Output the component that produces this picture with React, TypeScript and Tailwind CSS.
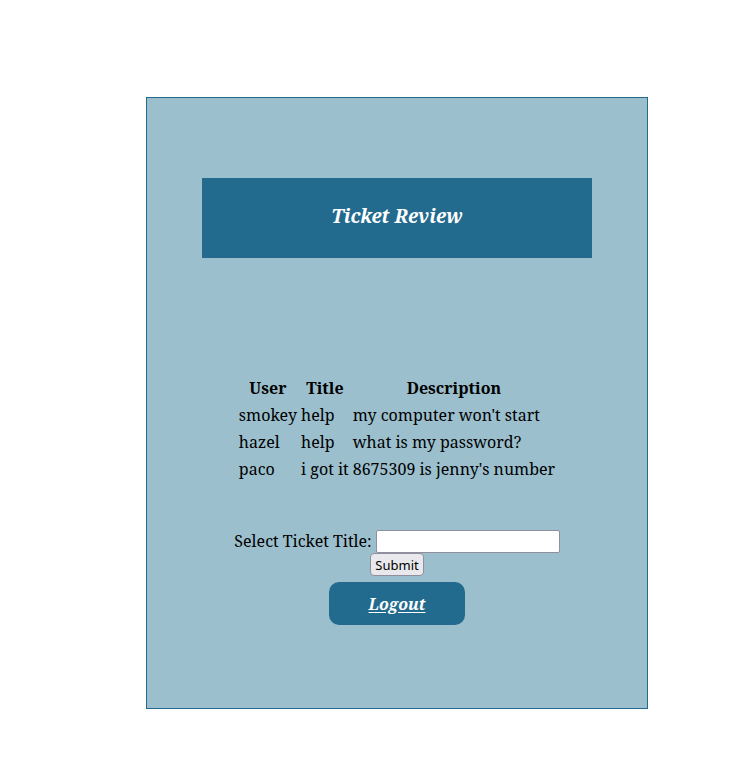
const tickets = [
  { user: 'smokey', title: 'help', description: "my computer won't start" },
  { user: 'hazel', title: 'help', description: 'what is my password?' },
  { user: 'paco', title: 'i got it', description: "8675309 is jenny's number" },
]

export default function App() {
  return (
    <main className="ml-[146px] mr-[102px] mt-[97px] border border-[#236b8e] bg-[#9bbfcd] px-[55px] pt-20 pb-[83px] font-['Noto_Serif','Liberation_Serif',serif] text-base leading-[23px] text-black">
      <header className="bg-[#236b8e] pt-6 pb-7 text-center">
        <h1 className="text-[19px] leading-7 font-bold italic text-white">Ticket Review</h1>
      </header>

      <table className="mx-auto mt-[116px] border-separate border-spacing-[2px]">
        <thead>
          <tr>
            <th className="p-px">User</th>
            <th className="p-px">Title</th>
            <th className="p-px">Description</th>
          </tr>
        </thead>
        <tbody>
          {tickets.map((ticket) => (
            <tr key={ticket.user}>
              <td className="p-px">{ticket.user}</td>
              <td className="p-px">{ticket.title}</td>
              <td className="p-px">{ticket.description}</td>
            </tr>
          ))}
        </tbody>
      </table>

      <form className="mt-[46px] flex flex-col items-center" onSubmit={(e) => e.preventDefault()}>
        <div className="flex items-center gap-1">
          <label htmlFor="ticket-title">Select Ticket Title:</label>
          <input
            id="ticket-title"
            type="text"
            className="h-[23px] w-[184px] rounded-[2px] border border-[#8f8f9d] bg-white px-1 text-[13px]"
          />
        </div>
        <button
          type="submit"
          className="h-[23px] w-[54px] rounded-[4px] border border-[#8f8f9d] bg-[#e9e9ed] font-['Noto_Sans',sans-serif] text-[13px] leading-5"
        >
          Submit
        </button>
      </form>

      <div className="mt-1.5 flex justify-center">
        <a
          href="#logout"
          className="rounded-[10px] bg-[#236b8e] px-10 pt-[11px] pb-[9px] font-bold italic text-white underline underline-offset-2"
        >
          Logout
        </a>
      </div>
    </main>
  )
}
